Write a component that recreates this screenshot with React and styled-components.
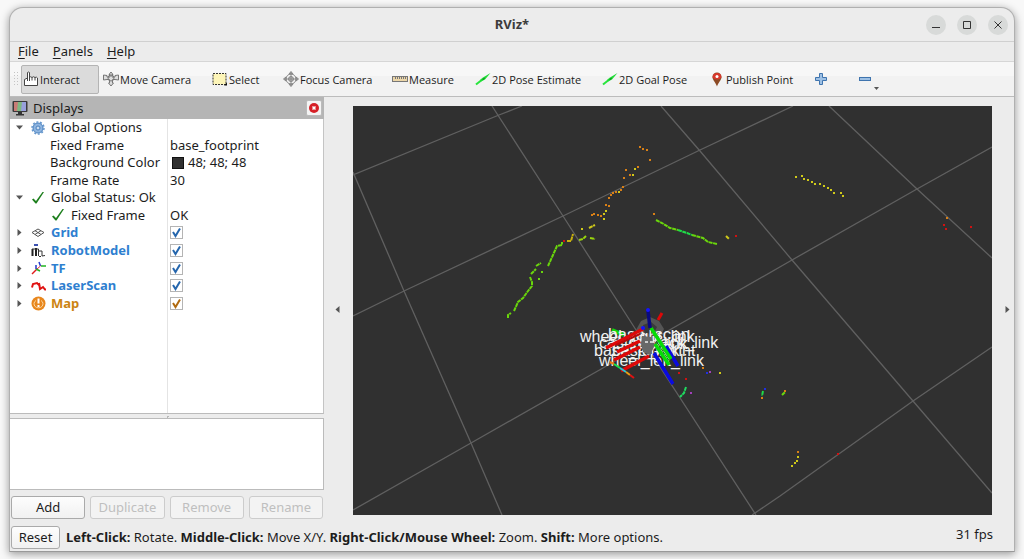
import React from 'react'
import styled, { createGlobalStyle } from 'styled-components'

const GlobalStyle = createGlobalStyle`
  * {
    box-sizing: border-box;
  }

  body {
    margin: 0;
    background: #f8f8f8;
    color: #1c1c1c;
    font-family: "Noto Sans", "Open Sans", sans-serif;
    font-size: 13px;
    line-height: 17px;
  }

  button, input {
    font: inherit;
    color: inherit;
    margin: 0;
  }
`

// ---------- icons ----------

const HandIcon = () => (
  <svg width="16" height="16" viewBox="0 0 16 16" fill="#fff" stroke="#444" strokeWidth="1">
    <path d="M1.5 14.500V8.500L4.500 7V1.500Q5.500 .5 6.500 1.500V6.500Q7.500 5 9 6.500Q10.500 5 12 6.500Q13.500 5.500 14.500 7V14.500Z" />
    <path d="M6.500 6v4M9 6.500v3M12 6.500v3M4.500 7v3" fill="none" />
  </svg>
)

const MoveIcon = () => (
  <svg width="16" height="16" viewBox="0 0 16 16" fill="#ddd" stroke="#777" strokeWidth="1">
    <path d="M8 1l2 2.500H9V6h3V4.500L15.500 4v5L12 8.500H9.500V12h1L8 15l-2.500-3h1V8.500H4L.5 9V4L4 4.500V6h3V3.500H6z" />
    <circle cx="8" cy="7" r="3" fill="none" />
  </svg>
)

const SelectIcon = () => (
  <svg width="16" height="14" viewBox="0 0 16 14">
    <rect x="1" y="1.500" width="13" height="11" fill="#fdf5b8" stroke="#333" strokeDasharray="2 1" />
    <path d="M12 13.500h3v-3z" fill="#111" />
  </svg>
)

const FocusIcon = () => (
  <svg width="16" height="16" viewBox="0 0 16 16" fill="none" stroke="#888">
    <path d="M8 .5L10 3H6zM8 15.500L6 13h4zM.5 8L3 6v4zM15.500 8L13 10V6z" fill="#999" />
    <circle cx="8" cy="8" r="5" />
    <circle cx="8" cy="8" r="2.500" fill="#bbb" />
    <path d="M8 3v10M3 8h10" />
  </svg>
)

const MeasureIcon = () => (
  <svg width="16" height="8" viewBox="0 0 16 8">
    <rect x=".5" y="1.500" width="15" height="5" fill="#ecd6a8" stroke="#777" />
    <path d="M3.500 2v2M5.500 2v2M7.500 2v2M9.500 2v2M11.500 2v2M13.500 2v2" stroke="#777" />
  </svg>
)

const ArrowIcon = () => (
  <svg width="16" height="14" viewBox="0 0 16 14">
    <path d="M1 12.500L8 7" stroke="#27e53c" strokeWidth="2" />
    <path d="M5 8l3-2.500L15.500 1 10 7.500 6 9.500z" fill="#1fdc35" />
    <path d="M7 7.500l3-2-1 2z" fill="#0a6f18" />
  </svg>
)

const PinIcon = () => (
  <svg width="10" height="15" viewBox="0 0 10 15">
    <path d="M5 14.500C4 11 .5 8 .5 5a4.500 4.500 0 0 1 9 0C9.500 8 6 11 5 14.500z" fill="#8c4a24" />
    <path d="M.5 5.500a4.500 4.500 0 0 1 9 0C7 8 3 8 .5 5.500z" fill="#d8382c" />
    <circle cx="5" cy="4.500" r="1.500" fill="#fff" />
  </svg>
)

const PlusIcon = () => (
  <svg width="12" height="12" viewBox="0 0 12 12">
    <path d="M4.500.5h3v4h4v3h-4v4h-3v-4h-4v-3h4z" fill="#9dc0e4" stroke="#3f74ae" />
  </svg>
)

const MinusIcon = () => (
  <svg width="12" height="12" viewBox="0 0 12 12">
    <rect x=".5" y="4.500" width="11" height="3" fill="#9dc0e4" stroke="#3f74ae" />
  </svg>
)

const MonitorIcon = () => (
  <svg width="16" height="16" viewBox="0 0 16 16">
    <rect x=".5" y="1" width="15" height="11" rx="1" fill="#3a3a3a" />
    <rect x="2" y="2" width="4" height="9" fill="#c97c76" />
    <path d="M6 2h4v9H5z" fill="#7fb882" />
    <path d="M10 2h4v9H9z" fill="#98a0dc" />
    <path d="M6 12h4v2h2v1.500H4V14h2z" fill="#333" />
  </svg>
)

const CloseIcon = () => (
  <svg width="12" height="12" viewBox="0 0 12 12">
    <circle cx="6" cy="6" r="5" fill="#d62027" />
    <path d="M4.500 4.500l3 3M7.500 4.500l-3 3" stroke="#fff" strokeWidth="1.500" />
  </svg>
)

const GearIcon = () => (
  <svg width="14" height="14" viewBox="0 0 14 14">
    <circle cx="7" cy="7" r="5" fill="#8fb5e0" stroke="#4b82bf" />
    <circle cx="7" cy="7" r="6" fill="none" stroke="#6597cd" strokeWidth="1.500" strokeDasharray="2 1.700" />
    <circle cx="7" cy="7" r="2" fill="#c9dcf1" stroke="#4b82bf" />
  </svg>
)

const TickIcon = () => (
  <svg width="14" height="14" viewBox="0 0 14 14">
    <path d="M1 8.500L2.500 7.500 5 10 11.500 1H13L5.500 12.500H4.500z" fill="#1d7f1d" />
  </svg>
)

const GridIcon = () => (
  <svg width="14" height="12" viewBox="0 0 14 12" fill="none" stroke="#555">
    <path d="M7 2l6 3.500L7 9.500 1 5.500zM4 3.700l6 3.800M10 3.700L4 7.500" />
  </svg>
)

const RobotIcon = () => (
  <svg width="15" height="15" viewBox="0 0 15 15" fill="none">
    <path d="M3 1h4v2H3z" fill="#3a50b0" />
    <path d="M1.500 6v7M5 5v8" stroke="#222" strokeWidth="2" />
    <path d="M1 6h6.500v7M8 8h3v5M11 13l3-.500M8 13.500h2" stroke="#333" />
  </svg>
)

const TfIcon = () => (
  <svg width="16" height="14" viewBox="0 0 16 14" fill="none" strokeWidth="1.500">
    <path d="M6 8L1 13" stroke="#e01b1b" />
    <path d="M5 8l4 2M10 5h5" stroke="#22b422" />
    <path d="M5 8V4M9.500 5L8 1" stroke="#2438cc" />
    <path d="M9.500 5L6 8" stroke="#d33" strokeWidth="1" />
  </svg>
)

const LaserIcon = () => (
  <svg width="16" height="12" viewBox="0 0 16 12">
    <path d="M1 7.500L2 4l4-1 3 3M8 3l1 6 3-2 2 2.500h1" fill="none" stroke="#e01212" strokeWidth="2" />
  </svg>
)

const WarnIcon = () => (
  <svg width="15" height="15" viewBox="0 0 15 15">
    <circle cx="7.500" cy="7.500" r="7" fill="#e8861c" />
    <path d="M5 4.500a4.500 4 0 1 0 5 0" fill="none" stroke="#fbd9a5" />
    <path d="M7.500 2.500v5M7.500 9v2" stroke="#fff" strokeWidth="2" />
  </svg>
)

const Caret = ({ dir }) => (
  <svg width="7" height="7" viewBox="0 0 7 7" fill="#555">
    <path d={dir === 'down' ? 'M0 1.500h7L3.500 5.500z' : dir === 'left' ? 'M5.500 0v7L1.500 3.500z' : 'M1.500 0v7L5.500 3.500z'} />
  </svg>
)

// ---------- data ----------

const tools = [
  { name: 'Interact', icon: <HandIcon />, width: 78, active: true },
  { name: 'Move Camera', icon: <MoveIcon />, width: 107 },
  { name: 'Select', icon: <SelectIcon />, width: 69 },
  { name: 'Focus Camera', icon: <FocusIcon />, width: 107 },
  { name: 'Measure', icon: <MeasureIcon />, width: 81 },
  { name: '2D Pose Estimate', icon: <ArrowIcon />, width: 125 },
  { name: '2D Goal Pose', icon: <ArrowIcon />, width: 105 },
  { name: 'Publish Point', icon: <PinIcon />, width: 104 },
]

const displays = [
  { name: 'Global Options', icon: <GearIcon />, caret: 'down' },
  { name: 'Fixed Frame', value: 'base_footprint', child: true },
  { name: 'Background Color', value: '48; 48; 48', child: true, swatch: '#303030' },
  { name: 'Frame Rate', value: '30', child: true },
  { name: 'Global Status: Ok', icon: <TickIcon />, caret: 'down' },
  { name: 'Fixed Frame', value: 'OK', icon: <TickIcon />, child: true },
  { name: 'Grid', icon: <GridIcon />, caret: 'right', color: '#2f7fd0' },
  { name: 'RobotModel', icon: <RobotIcon />, caret: 'right', color: '#2f7fd0' },
  { name: 'TF', icon: <TfIcon />, caret: 'right', color: '#2f7fd0' },
  { name: 'LaserScan', icon: <LaserIcon />, caret: 'right', color: '#2f7fd0' },
  { name: 'Map', icon: <WarnIcon />, caret: 'right', color: '#cc8412' },
]

const gridLines = [
  'M353 172L404 291L471 443L502 515',
  'M492 106L563 216L636 330L756 515',
  'M661 106L700 151L792 260L913 401L992 493',
  'M829 106L917 189L992 258',
  'M353 175L499 115L522 106',
  'M353 316L404 291L563 216L700 150L793 106',
  'M353 510L471 443L610 364L792 260L917 189L992 147',
  'M752 515L780 496L913 401L992 347',
]

const green = '#6ad60c'
const orange = '#d98016'
const yellow = '#cfc91a'
const red = '#d01212'

const scans = [
  { d: 'M508 318L508 315L511 313M514 311L518 302L523 298L528 291L532 286L532 282L530 277', color: green },
  { d: 'M531 274L536 269M536 266L541 263M548 266L553 255L557 246L562 245L562 242', color: green },
  { d: 'M579 240L583 239L586 236M590 238L595 239', color: '#9ad60c' },
  { d: 'M589 228L595 225', color: yellow },
  { d: 'M567 241L571 241L573 234', color: '#c8b010' },
  { d: 'M656 220L662 223L670 228L678 230', color: green },
  { d: 'M678 230L687 233L692 235', color: '#1fdc48' },
  { d: 'M692 235L703 238L708 242L717 244', color: green },
  { d: 'M726 236L729 239', color: yellow },
  { d: 'M763 391L762 396', color: '#1fdc48' },
  { d: 'M782 395L785 392', color: green },
  { d: 'M686 387L684 393L680 397', color: '#1fdc60' },
]

const dots = [
  [orange, [[640, 147], [643, 149], [647, 150], [650, 160], [638, 167], [626, 170], [630, 175], [624, 178], [623, 187], [621, 190], [616, 192], [613, 193], [611, 195], [609, 198], [606, 205], [609, 206], [601, 216], [598, 215], [594, 214], [592, 215], [654, 214], [947, 218], [703, 368], [762, 398], [785, 391], [798, 452]]],
  [yellow, [[635, 169], [633, 175], [619, 192], [606, 211], [604, 214], [604, 219], [582, 229], [796, 177], [802, 176], [804, 179], [808, 180], [812, 182], [815, 184], [820, 184], [824, 186], [828, 188], [831, 190], [834, 193], [841, 193], [843, 196], [720, 373], [798, 457], [797, 461], [795, 463], [792, 466]]],
  [red, [[564, 241], [736, 236], [944, 225], [946, 229], [971, 227], [679, 373], [686, 379], [838, 454]]],
  [green, [[542, 272], [539, 279]]],
  ['#2030e0', [[707, 373], [765, 389]]],
  ['#a040b8', [[710, 372], [691, 393]]],
]

const links = [
  { name: 'wheel_right_link', x: 580, y: 342 },
  { name: 'base_scan', x: 608, y: 340, size: 17 },
  { name: 'caster_back_link', x: 599, y: 348 },
  { name: 'imu_link', x: 629, y: 349 },
  { name: 'base_link', x: 612, y: 356 },
  { name: 'base_footprint', x: 594, y: 356 },
  { name: 'wheel_left_link', x: 599, y: 366 },
]

const Scene = () => (
  <SceneSvg viewBox="353 106 639 409" preserveAspectRatio="xMidYMid slice" role="img" aria-label="3D view">
    <g fill="none" stroke="#606060" strokeWidth="1.300">
      {gridLines.map((d) => <path key={d} d={d} />)}
    </g>
    <g fill="none" strokeWidth="2" strokeDasharray="4 .6">
      {scans.map(({ d, color }) => <path key={d} d={d} stroke={color} />)}
    </g>
    {dots.map(([color, points]) => (
      <g key={color} fill={color}>
        {points.map(([x, y]) => <rect key={`${x}-${y}`} x={x - 1} y={y - 1} width="2" height="2" />)}
      </g>
    ))}
    {/* robot body */}
    <path d="M636 330l5-9 9-4 9 4 5 8-4 8-4 10-8 8-8-8z" fill="#555" />
    <path d="M643 325l8-3 6 5-3 6-9 1z" fill="#3a3a3a" />
    <path d="M612 330L624 335" stroke="#0fd60f" strokeWidth="4" />
    <g fill="#f2f2f2" fontSize="16" fontFamily='"Liberation Sans", Arial, sans-serif'>
      {links.map(({ name, x, y, size }) => <text key={name} x={x} y={y} fontSize={size}>{name}</text>)}
    </g>
    <path d="M642 336l9 1 4 8-5 10-7-3-2-8z" fill="#686868" />
    <path d="M645 342h3M650 342h4" stroke="#eee" strokeWidth="1.500" />
    <g fill="none" strokeWidth="3.500">
      <path d="M606 348L643 329M617 352L640 341M614 360L640 347M621 371L649 356" stroke="#de0808" />
      <path d="M616 345L640 334" stroke="#b80808" strokeWidth="2" />
      <path d="M662 313L658 320" stroke="#de0808" strokeWidth="3" />
      <path d="M666 346L678 366M654 353L673 384" stroke="#0a0ae0" />
      <path d="M651 328L671 359M655 344L669 365" stroke="#06dc06" />
      <path d="M656 341L670 362" stroke="#078607" strokeWidth="1" />
      <path d="M648 311L650 328" stroke="#0a0a80" />
    </g>
    <circle cx="648" cy="310" r="2" fill="#1414ff" />
    <circle cx="643" cy="328" r="2" fill="#1414ff" />
    <g fill="none" strokeWidth="2">
      <path d="M610 362L614 364" stroke="#ee7a12" />
      <path d="M614 364L620 368" stroke="#16e04a" />
      <path d="M620 368L626 372" stroke="#28c8d8" />
      <path d="M626 372L630 375" stroke="#e89c12" />
      <path d="M630 375L634 378" stroke="#e01212" />
    </g>
  </SceneSvg>
)

const App = () => {
  return (
    <Desktop>
      <GlobalStyle />
      <Window>
        <TitleBar>
          <Title>RViz*</Title>
          <WindowControls>
            <RoundButton aria-label="Minimize">
              <svg width="8" height="8" viewBox="0 0 8 8"><path d="M0 6.500h8" stroke="#333" /></svg>
            </RoundButton>
            <RoundButton aria-label="Maximize">
              <svg width="8" height="8" viewBox="0 0 8 8"><path d="M.5.5h7v7h-7z" fill="none" stroke="#333" /></svg>
            </RoundButton>
            <RoundButton aria-label="Close">
              <svg width="8" height="8" viewBox="0 0 8 8"><path d="M.5.5l7 7M7.500.5l-7 7" stroke="#333" /></svg>
            </RoundButton>
          </WindowControls>
        </TitleBar>

        <MenuBar>
          <MenuButton><u>F</u>ile</MenuButton>
          <MenuButton><u>P</u>anels</MenuButton>
          <MenuButton><u>H</u>elp</MenuButton>
        </MenuBar>

        <ToolBar>
          <Grip />
          {tools.map(({ name, icon, width, active }) => (
            <ToolButton key={name} $width={width} $active={active}>
              <ToolIcon>{icon}</ToolIcon>
              {name}
            </ToolButton>
          ))}
          <ToolButton $width={42} aria-label="Add tool"><PlusIcon /></ToolButton>
          <ToolButton $width={24} aria-label="Remove tool">
            <MinusIcon />
            <MenuMark><Caret dir="down" /></MenuMark>
          </ToolButton>
        </ToolBar>

        <Content>
          <Panel>
            <PanelHeader>
              <MonitorIcon />
              <PanelTitle>Displays</PanelTitle>
              <PanelClose aria-label="Close panel"><CloseIcon /></PanelClose>
            </PanelHeader>
            <TreeBox>
              <Tree>
                <tbody>
                  {displays.map(({ name, value, icon, caret, child, color, swatch }, index) => (
                    <tr key={index}>
                      <NameCell>
                        <NameRow $child={child}>
                          {!child && <CaretSlot><Caret dir={caret} /></CaretSlot>}
                          {icon && <IconSlot>{icon}</IconSlot>}
                          {color
                            ? <DisplayLabel htmlFor={`display-${name}`} $color={color}>{name}</DisplayLabel>
                            : <span>{name}</span>}
                        </NameRow>
                      </NameCell>
                      <ValueCell>
                        <ValueRow>
                          {swatch && <Swatch $color={swatch} />}
                          {value}
                          {color && (
                            <CheckWrap>
                              <Check type="checkbox" id={`display-${name}`} defaultChecked />
                              <CheckMark viewBox="0 0 13 13">
                                <path d="M3 6l2.500 4L10 2.500" fill="none" stroke={name === 'Map' ? '#b06a10' : '#2566ad'} strokeWidth="2" />
                              </CheckMark>
                            </CheckWrap>
                          )}
                        </ValueRow>
                      </ValueCell>
                    </tr>
                  ))}
                </tbody>
              </Tree>
            </TreeBox>
            <Splitter />
            <Description />
            <PanelButtons>
              <PushButton>Add</PushButton>
              <PushButton disabled>Duplicate</PushButton>
              <PushButton disabled>Remove</PushButton>
              <PushButton disabled>Rename</PushButton>
            </PanelButtons>
          </Panel>
          <SideToggle $width={29} aria-label="Hide left dock"><Caret dir="left" /></SideToggle>
          <Viewport><Scene /></Viewport>
          <SideToggle $width={22} $end aria-label="Hide right dock"><Caret dir="right" /></SideToggle>
        </Content>

        <StatusBar>
          <PushButton $compact>Reset</PushButton>
          <Hint>
            <b>Left-Click:</b> Rotate. <b>Middle-Click:</b> Move X/Y. <b>Right-Click/Mouse Wheel:</b> Zoom. <b>Shift:</b> More options.
          </Hint>
          <Fps>31 fps</Fps>
        </StatusBar>
      </Window>
    </Desktop>
  )
}

const Desktop = styled.div`
  display: flex;
  min-height: 100vh;
  padding: 7px 9px 9px;
`

const Window = styled.main`
  flex: 1;
  min-width: 0;
  display: flex;
  flex-direction: column;
  background: #ececec;
  border: 1px solid #b0b0b0;
  border-bottom-color: #999;
  border-radius: 14px 14px 0 0;
  box-shadow: 0 2px 9px rgba(0, 0, 0, 0.4);
`

const TitleBar = styled.header`
  display: grid;
  grid-template-columns: 1fr auto 1fr;
  align-items: center;
  height: 34px;
  border-bottom: 1px solid #d0d0d0;
`

const Title = styled.h1`
  grid-column: 2;
  margin: 0;
  font-size: 13px;
  font-weight: 700;
  color: #3c3c3c;
`

const WindowControls = styled.div`
  display: flex;
  justify-content: flex-end;
  gap: 11px;
  padding-right: 6px;
`

const RoundButton = styled.button`
  display: grid;
  place-items: center;
  width: 20px;
  height: 20px;
  padding: 0;
  border: 0;
  border-radius: 50%;
  background: #d8dad9;
`

const MenuBar = styled.nav`
  display: flex;
  align-items: center;
  gap: 14px;
  height: 20px;
  padding-left: 8px;
  border-bottom: 1px solid #d6d6d6;
`

const MenuButton = styled.button`
  padding: 0;
  border: 0;
  background: none;

  u {
    text-underline-offset: 2px;
  }
`

const ToolBar = styled.div`
  display: flex;
  align-items: center;
  gap: 2px;
  height: 35px;
  padding-left: 3px;
  background: linear-gradient(#f7f7f7 40%, #f2f2f2 41%);
  border-bottom: 1px solid #bcbcbc;
`

const Grip = styled.span`
  width: 6px;
  height: 16px;
  background: radial-gradient(circle, #c4c4c4 1px, transparent 1px) 0 0 / 3px 3px;
`

const ToolButton = styled.button`
  position: relative;
  display: flex;
  align-items: center;
  gap: 1px;
  flex: 0 0 auto;
  width: ${({ $width }) => $width}px;
  height: 29px;
  padding: 0 1px;
  border: 1px solid ${({ $active }) => ($active ? '#b4b4b4' : 'transparent')};
  border-radius: 2px;
  background: ${({ $active }) => ($active ? '#dbdbdb' : 'none')};
  font-family: "Open Sans", "Noto Sans", sans-serif;
  font-size: 11px;
  white-space: nowrap;
`

const ToolIcon = styled.span`
  display: grid;
  place-items: center;
  flex: 0 0 16px;
`

const MenuMark = styled.span`
  position: absolute;
  right: 1px;
  bottom: 2px;
  line-height: 0;

  svg {
    width: 5px;
    height: 5px;
  }
`

const Content = styled.div`
  flex: 1;
  display: flex;
  min-height: 0;
`

const Panel = styled.aside`
  display: flex;
  flex-direction: column;
  flex: 0 0 314px;
`

const PanelHeader = styled.div`
  display: flex;
  align-items: center;
  gap: 5px;
  height: 22px;
  padding: 0 2px;
  background: #b5b5b5;
`

const PanelTitle = styled.h2`
  flex: 1;
  margin: 0;
  font-size: 13px;
  font-weight: 400;
`

const PanelClose = styled.button`
  display: grid;
  place-items: center;
  width: 16px;
  height: 16px;
  padding: 0;
  border: 1px solid #bbb;
  border-radius: 2px;
  background: #f4f4f4;
`

const TreeBox = styled.div`
  flex: 1;
  display: flex;
  flex-direction: column;
  background: linear-gradient(#e4e4e4, #e4e4e4) 157px 0 / 1px 100% no-repeat #fff;
  border-right: 1px solid #c4c4c4;
  border-bottom: 1px solid #bbb;
`

const Tree = styled.table`
  width: 100%;
  height: 193px;
  table-layout: fixed;
  border-collapse: collapse;
`

const NameCell = styled.td`
  width: 157px;
  padding: 0;
`

const NameRow = styled.div`
  display: flex;
  align-items: center;
  height: 17px;
  padding-left: ${({ $child }) => ($child ? 40 : 5)}px;
  white-space: nowrap;
`

const CaretSlot = styled.span`
  flex: 0 0 15px;
  display: flex;
  padding-left: 1px;
`

const IconSlot = styled.span`
  flex: 0 0 21px;
  display: flex;
  padding-left: 1px;
`

const DisplayLabel = styled.label`
  font-weight: 700;
  color: ${({ $color }) => $color};
`

const ValueCell = styled.td`
  padding: 0 0 0 3px;
`

const ValueRow = styled.div`
  display: flex;
  align-items: center;
  height: 17px;
`

const Swatch = styled.span`
  width: 12px;
  height: 12px;
  margin: 0 4px 0 2px;
  background: ${({ $color }) => $color};
  border: 1px solid #111;
`

const CheckWrap = styled.span`
  position: relative;
  display: flex;
`

const Check = styled.input`
  appearance: none;
  width: 13px;
  height: 13px;
  border: 1px solid #b4b4b4;
  background: #fff;
`

const CheckMark = styled.svg`
  position: absolute;
  inset: 0;
  pointer-events: none;
  opacity: 0;

  input:checked + & {
    opacity: 1;
  }
`

const Splitter = styled.div`
  height: 4px;
  background: radial-gradient(circle, #b8b8b8 1px, transparent 1px) center / 3px 3px no-repeat;
`

const Description = styled.div`
  height: 72px;
  background: #fff;
  border: 1px solid #bbb;
  border-left: 0;
`

const PanelButtons = styled.div`
  display: grid;
  grid-template-columns: repeat(4, 1fr);
  gap: 5px;
  padding: 6px 1px 3px;
`

const PushButton = styled.button`
  width: ${({ $compact }) => ($compact ? '49px' : 'auto')};
  height: 23px;
  padding: 0;
  border: 1px solid #aaa;
  border-radius: 3px;
  background: linear-gradient(#fdfdfd, #f1f1f1);

  &:disabled {
    color: #bfbfbf;
    border-color: #ccc;
    background: #f3f3f3;
  }
`

const SideToggle = styled.button`
  display: flex;
  align-items: center;
  justify-content: ${({ $end }) => ($end ? 'flex-end' : 'center')};
  flex: 0 0 ${({ $width }) => $width}px;
  padding: 0 ${({ $end }) => ($end ? 3 : 2)}px 0 0;
  border: 0;
  background: none;
`

const Viewport = styled.section`
  flex: 1;
  min-width: 0;
  display: flex;
  margin: 9px 0 7px;
  background: #303030;
`

const SceneSvg = styled.svg`
  flex: 1;
  min-width: 0;
  width: 100%;
`

const StatusBar = styled.footer`
  display: flex;
  align-items: center;
  gap: 6px;
  height: 29px;
  padding: 2px 21px 0 1px;
`

const Hint = styled.p`
  flex: 1;
  margin: 0;
  white-space: nowrap;
`

const Fps = styled.output`
  padding-bottom: 6px;
`

export default App
